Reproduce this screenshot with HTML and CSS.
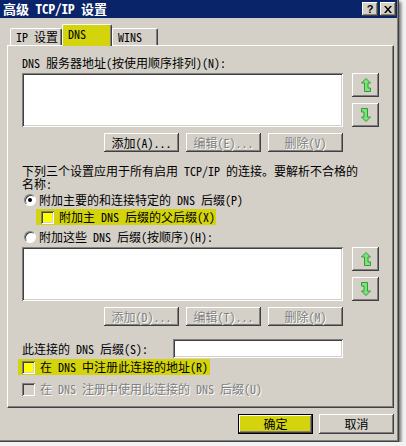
FILE: index.html
```html
<!DOCTYPE html>
<html lang="zh-CN">
<head>
<meta charset="utf-8">
<title>高级 TCP/IP 设置</title>
<link rel="stylesheet" href="styles.css">
</head>
<body>
<div class="win">
  <div class="titlebar">
    <span class="title">高级 TCP/IP 设置</span>
    <div class="caps">
      <span class="cap help">?</span>
      <span class="cap"><svg width="8" height="7" viewBox="0 0 8 7"><path d="M0 0h2l2 2.5L6 0h2L5 3.5 8 7H6L4 4.5 2 7H0l3-3.5z" fill="#000"/></svg></span>
    </div>
  </div>
  <div class="client">
    <div class="tabs">
      <div class="tab t1">IP 设置</div>
      <div class="tab sel">DNS</div>
      <div class="tab t3">WINS</div>
    </div>
    <div class="panel">
      <div class="lbl">DNS 服务器地址(按使用顺序排列)(N):</div>
      <div class="listrow">
        <div class="list sunken"></div>
        <div class="arrows">
          <div class="btn arrow"><svg width="10" height="14" viewBox="0 0 10 14"><path d="M5 0.5L9.5 5H7V10H9.5V13.5H3.5V5H0.5Z" fill="#7ee07e" stroke="#2e9e2e" stroke-width="1"/></svg></div>
          <div class="btn arrow"><svg width="10" height="14" viewBox="0 0 10 14"><path d="M5 13.5L0.5 9H3V4H0.5V0.5H6.5V9H9.5Z" fill="#7ee07e" stroke="#2e9e2e" stroke-width="1"/></svg></div>
        </div>
      </div>
      <div class="btnrow">
        <div class="btn push">添加(A)...</div>
        <div class="btn push dis">编辑(E)...</div>
        <div class="btn push dis">删除(V)</div>
      </div>
      <p class="para">下列三个设置应用于所有启用 TCP/IP 的连接。要解析不合格的<br>名称:</p>
      <div class="opt r1"><span class="radio on"></span>附加主要的和连接特定的 DNS 后缀(P)</div>
      <div class="opt hl chk1"><span class="cb"></span>附加主 DNS 后缀的父后缀(X)</div>
      <div class="opt r2"><span class="radio"></span>附加这些 DNS 后缀(按顺序)(H):</div>
      <div class="listrow lr2">
        <div class="list sunken"></div>
        <div class="arrows">
          <div class="btn arrow"><svg width="10" height="14" viewBox="0 0 10 14"><path d="M5 0.5L9.5 5H7V10H9.5V13.5H3.5V5H0.5Z" fill="#7ee07e" stroke="#2e9e2e" stroke-width="1"/></svg></div>
          <div class="btn arrow"><svg width="10" height="14" viewBox="0 0 10 14"><path d="M5 13.5L0.5 9H3V4H0.5V0.5H6.5V9H9.5Z" fill="#7ee07e" stroke="#2e9e2e" stroke-width="1"/></svg></div>
        </div>
      </div>
      <div class="btnrow">
        <div class="btn push dis">添加(D)...</div>
        <div class="btn push dis">编辑(T)...</div>
        <div class="btn push dis">删除(M)</div>
      </div>
      <div class="suffix">
        <span>此连接的 DNS 后缀(S):</span>
        <div class="input sunken"></div>
      </div>
      <div class="opt hl chk2"><span class="cb"></span>在 DNS 中注册此连接的地址(R)</div>
      <div class="opt chk3 distext"><span class="cb off"></span>在 DNS 注册中使用此连接的 DNS 后缀(U)</div>
    </div>
    <div class="footer">
      <div class="btn push def">确定</div>
      <div class="btn push">取消</div>
    </div>
  </div>
</div>
</body>
</html>
```
FILE: styles.css
```css
* { box-sizing: border-box; }
body {
  margin: 0;
  background: #f2f2f2;
  font-family: "Noto Sans Mono CJK SC", "Noto Sans CJK SC", sans-serif;
  font-size: 12px;
  line-height: 12px;
  color: #000;
}
.win {
  width: 399px;
  height: 442px;
  background: #d4d0c8;
  border-right: 1px solid #404040;
  border-bottom: 1px solid #404040;
  box-shadow: inset -1px -1px #808080, 2px 2px 3px rgba(0,0,0,.55);
  display: flex;
  flex-direction: column;
}
.titlebar {
  height: 18px;
  margin-right: 1px;
  background: #0a246a;
  color: #fff;
  display: flex;
  align-items: center;
  justify-content: space-between;
  padding: 0 1px 0 3px;
}
.title { font-weight: bold; font-size: 13px; line-height: 18px; }
.caps { display: flex; gap: 2px; }
.cap {
  width: 16px; height: 14px;
  background: #d4d0c8;
  box-shadow: inset -1px -1px #404040, inset 1px 1px #fff, inset -2px -2px #808080;
  display: flex; align-items: center; justify-content: center;
  color: #000; font-weight: bold; font-size: 11px; font-family: "Liberation Sans", sans-serif;
}
.client { padding: 6px 4px 0 7px; }
.tabs {
  height: 21px;
  display: flex;
  align-items: flex-end;
  padding-left: 3px;
}
.tab {
  height: 17px;
  border-top: 1px solid #fff;
  border-left: 1px solid #fff;
  border-right: 1px solid #404040;
  box-shadow: inset -1px 0 #808080;
  border-radius: 2px 2px 0 0;
  padding: 2px 0 0 5px;
  background: #d4d0c8;
  white-space: nowrap;
}
.t1 { width: 52px; }
.t3 { width: 46px; }
.sel {
  width: 50px;
  height: 22px;
  margin-bottom: -1px;
  padding-top: 3px;
  background: #d4d40c;
  position: relative;
  z-index: 1;
}
.panel {
  width: 387px;
  height: 363px;
  border-top: 1px solid #fff;
  border-left: 1px solid #fff;
  border-right: 1px solid #404040;
  border-bottom: 1px solid #404040;
  box-shadow: inset -1px -1px #808080;
  padding: 11px 0 0 14px;
  white-space: nowrap;
}
.lbl { height: 12px; margin-bottom: 4px; }
.listrow { display: flex; gap: 9px; }
.list { width: 321px; height: 54px; }
.sunken {
  background: #fff;
  box-shadow: inset 1px 1px #808080, inset -1px -1px #fff, inset 2px 2px #404040, inset -2px -2px #d4d0c8;
}
.arrows { display: flex; flex-direction: column; gap: 6px; }
.btn {
  background: #d4d0c8;
  box-shadow: inset -1px -1px #404040, inset 1px 1px #fff, inset -2px -2px #808080;
  display: flex; align-items: center; justify-content: center;
}
.arrow { width: 27px; height: 24px; }
.btnrow {
  width: 321px;
  margin-top: 6px;
  display: flex;
  justify-content: flex-end;
  gap: 7px;
}
.push { width: 75px; height: 19px; }
.dis { color: #808080; text-shadow: 1px 1px 0 #fff; }
.para { margin: 12px 0 0; line-height: 13px; }
.opt { display: flex; align-items: center; }
.r1 { margin-top: 3px; height: 14px; padding-left: 2px; }
.r2 { margin-top: 5px; height: 14px; padding-left: 2px; }
.radio {
  width: 12px; height: 12px;
  border-radius: 50%;
  background: #fff;
  border: 1px solid;
  border-color: #808080 #fff #fff #808080;
  box-shadow: inset 1px 1px #404040;
  margin-right: 3px;
  display: flex; align-items: center; justify-content: center;
}
.radio.on::after {
  content: "";
  width: 4px; height: 4px;
  border-radius: 50%;
  background: #000;
}
.hl { background: #d4d40c; height: 16px; }
.chk1 { margin-top: 2px; margin-left: 14px; width: 180px; padding-left: 5px; }
.cb {
  width: 13px; height: 13px;
  background: #ffff00;
  box-shadow: inset 1px 1px #808080, inset -1px -1px #fff, inset 2px 2px #404040, inset -2px -2px #d4d0c8;
  margin-right: 5px;
  flex: none;
}
.cb.off { background: #d4d0c8; }
.lr2 { margin-top: 3px; }
.suffix {
  width: 321px;
  margin-top: 13px;
  height: 19px;
  display: flex;
  align-items: center;
  justify-content: space-between;
}
.input { width: 170px; height: 19px; }
.chk2 { margin-top: 1px; margin-left: -4px; width: 192px; padding-left: 4px; }
.chk3 { margin-top: 7px; height: 14px; }
.distext { color: #808080; text-shadow: 1px 1px 0 #fff; }
.footer {
  margin-top: 6px;
  display: flex;
  justify-content: flex-end;
  gap: 6px;
}
.def {
  border: 1px solid #000;
  background: #d4d40c;
  height: 20px;
}
.footer .push { height: 20px; }
```
